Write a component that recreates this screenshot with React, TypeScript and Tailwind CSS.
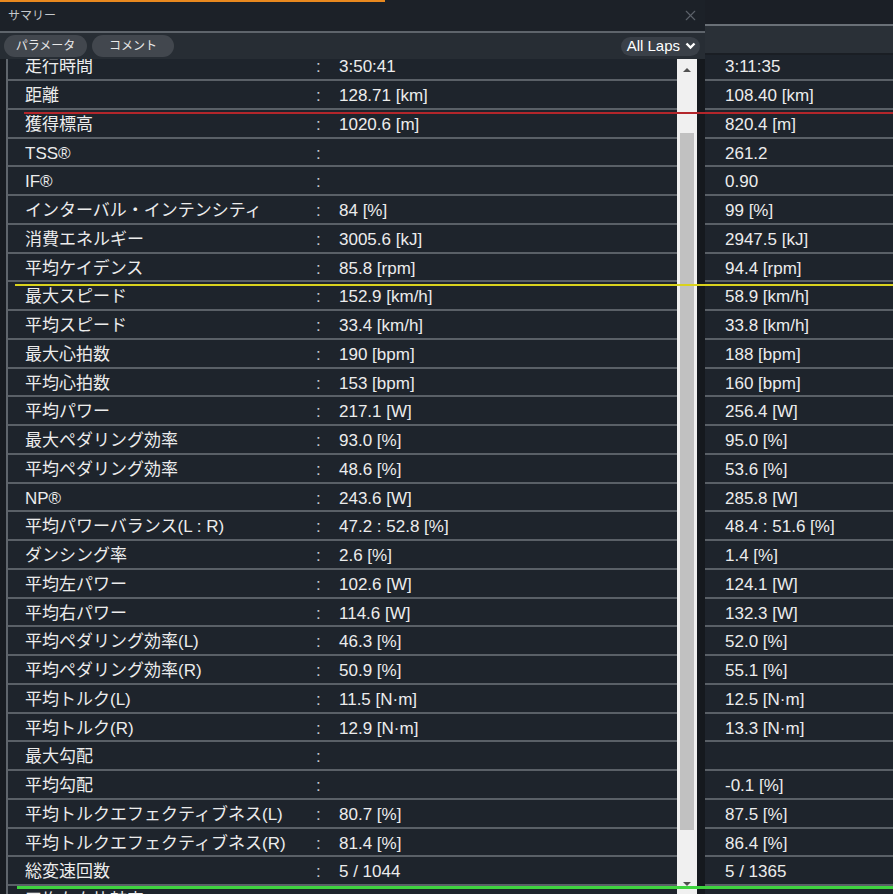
import { X } from "lucide-react";

const FONT = { fontFamily: '"Liberation Sans", "Noto Sans CJK JP", sans-serif' };

const ROWS: [string, string, string][] = [
  ["走行時間", "3:50:41", "3:11:35"],
  ["距離", "128.71 [km]", "108.40 [km]"],
  ["獲得標高", "1020.6 [m]", "820.4 [m]"],
  ["TSS®", "", "261.2"],
  ["IF®", "", "0.90"],
  ["インターバル・インテンシティ", "84 [%]", "99 [%]"],
  ["消費エネルギー", "3005.6 [kJ]", "2947.5 [kJ]"],
  ["平均ケイデンス", "85.8 [rpm]", "94.4 [rpm]"],
  ["最大スピード", "152.9 [km/h]", "58.9 [km/h]"],
  ["平均スピード", "33.4 [km/h]", "33.8 [km/h]"],
  ["最大心拍数", "190 [bpm]", "188 [bpm]"],
  ["平均心拍数", "153 [bpm]", "160 [bpm]"],
  ["平均パワー", "217.1 [W]", "256.4 [W]"],
  ["最大ペダリング効率", "93.0 [%]", "95.0 [%]"],
  ["平均ペダリング効率", "48.6 [%]", "53.6 [%]"],
  ["NP®", "243.6 [W]", "285.8 [W]"],
  ["平均パワーバランス(L : R)", "47.2 : 52.8 [%]", "48.4 : 51.6 [%]"],
  ["ダンシング率", "2.6 [%]", "1.4 [%]"],
  ["平均左パワー", "102.6 [W]", "124.1 [W]"],
  ["平均右パワー", "114.6 [W]", "132.3 [W]"],
  ["平均ペダリング効率(L)", "46.3 [%]", "52.0 [%]"],
  ["平均ペダリング効率(R)", "50.9 [%]", "55.1 [%]"],
  ["平均トルク(L)", "11.5 [N·m]", "12.5 [N·m]"],
  ["平均トルク(R)", "12.9 [N·m]", "13.3 [N·m]"],
  ["最大勾配", "", ""],
  ["平均勾配", "", "-0.1 [%]"],
  ["平均トルクエフェクティブネス(L)", "80.7 [%]", "87.5 [%]"],
  ["平均トルクエフェクティブネス(R)", "81.4 [%]", "86.4 [%]"],
  ["総変速回数", "5 / 1044", "5 / 1365"],
  ["平均左右比較率", "", ""],
];

function Scrollbar() {
  return (
    <div className="flex w-[20px] shrink-0 flex-col bg-[#f0f0f0]">
      <div className="flex h-[22px] items-center justify-center">
        <div className="h-0 w-0 border-x-[4px] border-b-[4px] border-x-transparent border-b-[#505050]" />
      </div>
      <div className="h-[52px]" />
      <div className="mx-auto h-[697px] w-[14px] bg-[#c1c1c1]" />
      <div className="flex-1" />
      <div className="flex h-[20px] items-center justify-center">
        <div className="h-0 w-0 border-x-[4px] border-t-[4px] border-x-transparent border-t-[#505050]" />
      </div>
    </div>
  );
}

export default function App() {
  return (
    <div
      className="relative flex h-[894px] w-[893px] overflow-hidden bg-[#1b2027] text-[17px] text-[#ececec]"
      style={FONT}
    >
      {/* Summary window */}
      <div className="flex w-[705px] shrink-0 flex-col">
        <div className="flex h-[31px] items-center justify-between bg-[#1c2128] pl-2 pr-[6px]">
          <span className="text-[12px] text-[#c4c8cc]">サマリー</span>
          <X size={17} strokeWidth={1.6} className="text-[#5c626a]" />
        </div>
        <div className="h-[2px] bg-[#5e646b]" />
        <div className="flex h-[26px] items-center justify-between bg-[#272d34] pl-1 pr-[5px]">
          <div className="flex gap-[5px]">
            <span className="flex h-[22px] w-[83px] items-center justify-center rounded-full bg-[#42474e] text-[12px] text-[#e8e8e8]">
              パラメータ
            </span>
            <span className="flex h-[22px] w-[82px] items-center justify-center rounded-full bg-[#42474e] text-[12px] text-[#e8e8e8]">
              コメント
            </span>
          </div>
          <span className="flex h-[19px] items-center gap-[5px] rounded-full bg-[#3a4048] pl-[6px] pr-[4px] text-[15px] text-white">
            All Laps
            <svg width="11" height="8" viewBox="0 0 11 8">
              <path d="M1.5 1.5 L5.5 5.5 L9.5 1.5" fill="none" stroke="#fff" strokeWidth="2.4" />
            </svg>
          </span>
        </div>

        <div className="flex min-h-0 flex-1">
          <div className="w-[8px] shrink-0 border-r-2 border-[#5f656c] bg-[#181c22]" />
          <div className="min-w-0 flex-1 overflow-hidden bg-[#1e242c]">
            <div className="-mt-[6.75px]">
              {ROWS.map(([label, value]) => (
                <div
                  key={label}
                  className="flex h-[28.75px] items-center border-b-2 border-[#5a6067] pl-[17px] pt-[3px]"
                >
                  <span className="w-[291px] shrink-0 whitespace-nowrap">{label}</span>
                  <span className="w-[23px] shrink-0 text-[#c4c8cc]">:</span>
                  <span className="whitespace-nowrap">{value}</span>
                </div>
              ))}
            </div>
          </div>
          <Scrollbar />
          <div className="w-[8px] shrink-0 bg-[#15191e]" />
        </div>
      </div>

      {/* Window behind, comparison column */}
      <div className="flex min-w-0 flex-1 flex-col">
        <div className="h-[24px] bg-[#1b1f26]" />
        <div className="h-[2px] bg-[#6a7077]" />
        <div className="h-[27px] bg-[#2a3037]" />
        <div className="h-[2px] bg-[#1a1e24]" />
        <div className="min-h-0 flex-1 overflow-hidden bg-[#1e242c]">
          <div className="-mt-[2.75px]">
            {ROWS.map(([label, , value]) => (
              <div
                key={label}
                className="flex h-[28.75px] items-center border-b-2 border-[#5a6067] pl-[20px] pt-[3px]"
              >
                <span className="whitespace-nowrap">{value}</span>
              </div>
            ))}
          </div>
        </div>
      </div>

      {/* overlay markers */}
      <div className="absolute left-0 top-0 h-[2px] w-[385px] bg-[#e8891f]" />
      <div className="absolute left-[24px] right-0 top-[112px] h-[2px] bg-[#b3262b]" />
      <div className="absolute left-[15px] right-0 top-[284px] h-[2px] bg-[#d9d21e]" />
      <div className="absolute left-[17px] right-0 top-[886px] h-[3px] bg-[#3fd43f]" />
    </div>
  );
}
